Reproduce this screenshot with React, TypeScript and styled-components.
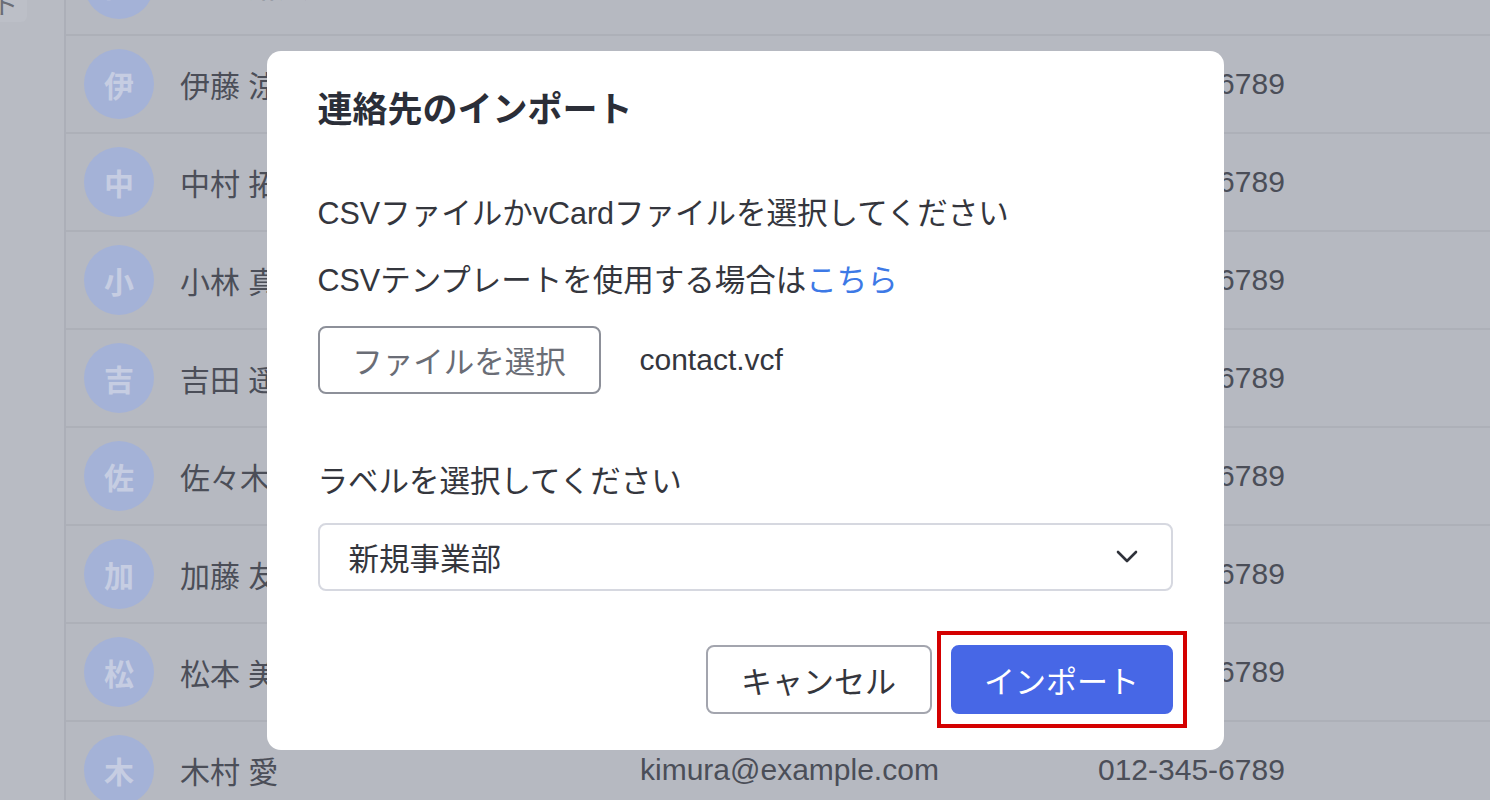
import React from 'react';
import styled, { createGlobalStyle } from 'styled-components';

const GlobalStyle = createGlobalStyle`
  html, body {
    margin: 0;
    padding: 0;
    overflow: hidden;
  }
  body {
    font-family: "Liberation Sans", "Noto Sans CJK JP", sans-serif;
    -webkit-font-smoothing: antialiased;
  }
  * {
    box-sizing: border-box;
  }
`;

const contacts = [
  { name: '山口 翔太', email: 'yamaguchi@example.com', phone: '012-345-6789' },
  { name: '伊藤 涼子', email: 'ito@example.com', phone: '012-345-6789' },
  { name: '中村 拓也', email: 'nakamura@example.com', phone: '012-345-6789' },
  { name: '小林 真由美', email: 'kobayashi@example.com', phone: '012-345-6789' },
  { name: '吉田 遥', email: 'yoshida@example.com', phone: '012-345-6789' },
  { name: '佐々木 健', email: 'sasaki@example.com', phone: '012-345-6789' },
  { name: '加藤 友美', email: 'kato@example.com', phone: '012-345-6789' },
  { name: '松本 美咲', email: 'matsumoto@example.com', phone: '012-345-6789' },
  { name: '木村 愛', email: 'kimura@example.com', phone: '012-345-6789' },
  { name: '林 大輔', email: 'hayashi@example.com', phone: '012-345-6789' },
];

const App = () => {
  return (
    <>
      <GlobalStyle />
      <Page>
        <Sidebar>
          <SideItem>ト</SideItem>
        </Sidebar>

        <Main>
          <List>
            {contacts.map((c, i) => (
              <Row key={c.email} first={i === 0}>
                <Avatar>{c.name.charAt(0)}</Avatar>
                <Cell>{c.name}</Cell>
                <Cell>{c.email}</Cell>
                <Cell>{c.phone}</Cell>
              </Row>
            ))}
          </List>
        </Main>
      </Page>

      <Backdrop>
        <Dialog>
          <Title>連絡先のインポート</Title>

          <Section>
            <Text>CSVファイルかvCardファイルを選択してください</Text>
            <Text>
              CSVテンプレートを使用する場合は<Link href="#">こちら</Link>
            </Text>
            <FileRow>
              <FileButton>ファイルを選択</FileButton>
              <FileName>contact.vcf</FileName>
            </FileRow>
          </Section>

          <LabelSection>
            <Text>ラベルを選択してください</Text>
            <Select>
              <span>新規事業部</span>
              <svg width="22" height="13" viewBox="0 0 22 13" fill="none">
                <polyline
                  points="2,2 11,11 20,2"
                  stroke="#2f323a"
                  strokeWidth="2.6"
                  strokeLinecap="round"
                  strokeLinejoin="round"
                />
              </svg>
            </Select>
          </LabelSection>

          <Footer>
            <Button>キャンセル</Button>
            <Button primary highlighted>インポート</Button>
          </Footer>
        </Dialog>
      </Backdrop>
    </>
  );
};

const Page = styled.div`
  width: 100vw;
  height: 100vh;
  display: flex;
  background-color: #b6b9c1;
  overflow: hidden;
`;

const Sidebar = styled.div`
  width: 66px;
  flex-shrink: 0;
  background-color: #b8bbc3;
  border-right: 2px solid #acafb8;
`;

const SideItem = styled.div`
  width: 27px;
  height: 22px;
  background-color: #bcbfc7;
  border-radius: 0 0 6px 0;
  overflow: hidden;
  font-family: "Noto Sans CJK JP", sans-serif;
  font-size: 26px;
  line-height: 6px;
  color: #6a6d76;
  text-indent: -8px;
`;

const Main = styled.div`
  flex: 1;
  overflow: hidden;
`;

const List = styled.div`
  margin-top: -62px;
  display: flex;
  flex-direction: column;
`;

const Row = styled.div<{ first?: boolean }>`
  height: 98px;
  padding-left: 18px;
  padding-bottom: ${(p) => (p.first ? '5px' : '0')};
  display: grid;
  grid-template-columns: 70px 434px 432px 1fr;
  column-gap: 26px;
  align-items: center;
  border-bottom: 2px solid #adb0b8;
`;

const Avatar = styled.div`
  width: 70px;
  height: 70px;
  border-radius: 50%;
  background-color: #a4b2d7;
  color: #c6cde2;
  font-family: "Noto Sans CJK JP", sans-serif;
  font-weight: 700;
  font-size: 30px;
  display: flex;
  justify-content: center;
  align-items: center;
`;

const Cell = styled.div`
  font-size: 30px;
  color: #4b4e58;
  white-space: nowrap;
`;

const Backdrop = styled.div`
  position: fixed;
  inset: 0;
  display: flex;
  justify-content: center;
  align-items: center;
`;

const Dialog = styled.div`
  width: 957px;
  background-color: #ffffff;
  border-radius: 14px;
  padding: 35px 51px 36px;
  display: flex;
  flex-direction: column;
`;

const Title = styled.h2`
  margin: 0 0 58px;
  font-size: 35px;
  line-height: 48px;
  font-weight: 700;
  color: #2b2e38;
`;

const Section = styled.div`
  display: flex;
  flex-direction: column;
  gap: 25px;
`;

const LabelSection = styled.div`
  margin-top: 66px;
  display: flex;
  flex-direction: column;
  gap: 21px;
`;

const Text = styled.div`
  font-size: 30.5px;
  line-height: 42px;
  color: #34363d;
`;

const Link = styled.a`
  color: #3d79e6;
  text-decoration: none;
`;

const FileRow = styled.div`
  display: flex;
  align-items: center;
  gap: 39px;
`;

const FileButton = styled.button`
  width: 283px;
  height: 68px;
  border: 2px solid #8d9099;
  border-radius: 8px;
  background-color: #ffffff;
  font-family: inherit;
  font-size: 30.5px;
  color: #6a6d76;
  cursor: pointer;
`;

const FileName = styled.span`
  font-size: 30px;
  color: #34363d;
`;

const Select = styled.div`
  height: 68px;
  border: 2px solid #d6d8e0;
  border-radius: 8px;
  padding: 0 33px 0 29px;
  display: flex;
  justify-content: space-between;
  align-items: center;
  font-size: 30.5px;
  color: #34363d;
  cursor: pointer;
`;

const Footer = styled.div`
  margin-top: 54px;
  display: flex;
  justify-content: flex-end;
  gap: 19px;
`;

const Button = styled.button<{ primary?: boolean; highlighted?: boolean }>`
  position: relative;
  width: ${(p) => (p.primary ? '222px' : '226px')};
  height: 69px;
  border-radius: 8px;
  border: 2px solid ${(p) => (p.primary ? '#4767e6' : '#a3a5ae')};
  background-color: ${(p) => (p.primary ? '#4767e6' : '#ffffff')};
  color: ${(p) => (p.primary ? '#ffffff' : '#34363d')};
  font-family: inherit;
  font-size: 31px;
  cursor: pointer;

  &::after {
    content: '';
    display: ${(p) => (p.highlighted ? 'block' : 'none')};
    position: absolute;
    inset: -16px;
    border: 4px solid #d40000;
    pointer-events: none;
  }
`;

export default App;
